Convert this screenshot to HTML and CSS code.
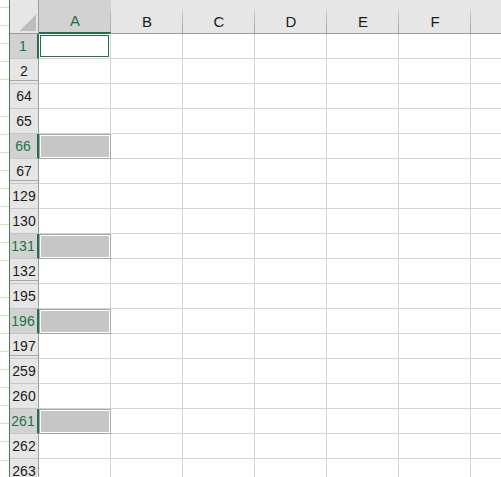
FILE: index.html
```html
<!DOCTYPE html>
<html lang="ja">
<head>
    <meta charset="UTF-8" />
    <title>Book1 - Excel</title>
    <link rel="stylesheet" href="styles.css">
</head>
<body>
    <div class="gutter"></div>

    <div class="sheet">
        <div class="row head">
            <div class="corner"></div>
            <div class="ch on">A</div>
            <div class="ch">B</div>
            <div class="ch">C</div>
            <div class="ch">D</div>
            <div class="ch">E</div>
            <div class="ch">F</div>
            <div class="ch"></div>
        </div>

        <div class="row">
            <div class="rh on">1</div>
            <div class="c active"></div><div class="c"></div><div class="c"></div><div class="c"></div><div class="c"></div><div class="c"></div><div class="c"></div>
        </div>
        <div class="row">
            <div class="rh gap">2</div>
            <div class="c"></div><div class="c"></div><div class="c"></div><div class="c"></div><div class="c"></div><div class="c"></div><div class="c"></div>
        </div>
        <div class="row">
            <div class="rh">64</div>
            <div class="c"></div><div class="c"></div><div class="c"></div><div class="c"></div><div class="c"></div><div class="c"></div><div class="c"></div>
        </div>
        <div class="row">
            <div class="rh">65</div>
            <div class="c"></div><div class="c"></div><div class="c"></div><div class="c"></div><div class="c"></div><div class="c"></div><div class="c"></div>
        </div>
        <div class="row">
            <div class="rh on">66</div>
            <div class="c sel"></div><div class="c"></div><div class="c"></div><div class="c"></div><div class="c"></div><div class="c"></div><div class="c"></div>
        </div>
        <div class="row">
            <div class="rh gap">67</div>
            <div class="c"></div><div class="c"></div><div class="c"></div><div class="c"></div><div class="c"></div><div class="c"></div><div class="c"></div>
        </div>
        <div class="row">
            <div class="rh">129</div>
            <div class="c"></div><div class="c"></div><div class="c"></div><div class="c"></div><div class="c"></div><div class="c"></div><div class="c"></div>
        </div>
        <div class="row">
            <div class="rh">130</div>
            <div class="c"></div><div class="c"></div><div class="c"></div><div class="c"></div><div class="c"></div><div class="c"></div><div class="c"></div>
        </div>
        <div class="row">
            <div class="rh on">131</div>
            <div class="c sel"></div><div class="c"></div><div class="c"></div><div class="c"></div><div class="c"></div><div class="c"></div><div class="c"></div>
        </div>
        <div class="row">
            <div class="rh gap">132</div>
            <div class="c"></div><div class="c"></div><div class="c"></div><div class="c"></div><div class="c"></div><div class="c"></div><div class="c"></div>
        </div>
        <div class="row">
            <div class="rh">195</div>
            <div class="c"></div><div class="c"></div><div class="c"></div><div class="c"></div><div class="c"></div><div class="c"></div><div class="c"></div>
        </div>
        <div class="row">
            <div class="rh on">196</div>
            <div class="c sel"></div><div class="c"></div><div class="c"></div><div class="c"></div><div class="c"></div><div class="c"></div><div class="c"></div>
        </div>
        <div class="row">
            <div class="rh gap">197</div>
            <div class="c"></div><div class="c"></div><div class="c"></div><div class="c"></div><div class="c"></div><div class="c"></div><div class="c"></div>
        </div>
        <div class="row">
            <div class="rh">259</div>
            <div class="c"></div><div class="c"></div><div class="c"></div><div class="c"></div><div class="c"></div><div class="c"></div><div class="c"></div>
        </div>
        <div class="row">
            <div class="rh">260</div>
            <div class="c"></div><div class="c"></div><div class="c"></div><div class="c"></div><div class="c"></div><div class="c"></div><div class="c"></div>
        </div>
        <div class="row">
            <div class="rh on">261</div>
            <div class="c sel"></div><div class="c"></div><div class="c"></div><div class="c"></div><div class="c"></div><div class="c"></div><div class="c"></div>
        </div>
        <div class="row">
            <div class="rh">262</div>
            <div class="c"></div><div class="c"></div><div class="c"></div><div class="c"></div><div class="c"></div><div class="c"></div><div class="c"></div>
        </div>
        <div class="row">
            <div class="rh">263</div>
            <div class="c"></div><div class="c"></div><div class="c"></div><div class="c"></div><div class="c"></div><div class="c"></div><div class="c"></div>
        </div>
    </div>
</body>
</html>
```

FILE: styles.css
```css
:root {
    --green: #217346;
    --head-bg: #e6e6e6;
    --head-on: #d2d2d2;
    --grid: #d4d4d4;
    --head-line: #9b9b9b;
    --text: #1a1a1a;
}

* {
    box-sizing: border-box;
}

html, body {
    margin: 0;
    height: 100%;
    overflow: hidden;
}

body {
    display: flex;
    background: #ffffff;
    font-family: 'Liberation Sans', 'Noto Sans CJK JP', sans-serif;
    font-size: 14px;
    color: var(--text);
}

/* outline strip on the far left */
.gutter {
    flex: 0 0 10px;
    border-right: 1px solid #4d7a60;
    background: repeating-linear-gradient(
        to bottom,
        #ffffff 0,
        #ffffff 7px,
        #cfe6b4 7px,
        #cfe6b4 8px,
        #ffffff 8px,
        #ffffff 18.1px
    );
}

.sheet {
    display: flex;
    flex-direction: column;
}

.row {
    display: flex;
    height: 25px;
    flex: 0 0 25px;
}

.row.head {
    height: 34px;
    flex-basis: 34px;
    background: var(--head-bg);
}

.corner {
    width: 29px;
    border-bottom: 1px solid var(--head-line);
    border-right: 1px solid var(--head-line);
    background:
        linear-gradient(to bottom right, transparent 50%, #bdbdbd 50%) right 2px bottom 2px / 16px 16px no-repeat,
        var(--head-bg);
}

.ch {
    width: 72px;
    flex: 0 0 72px;
    display: flex;
    align-items: center;
    justify-content: center;
    padding-top: 10px;
    border-bottom: 1px solid var(--head-line);
    background:
        linear-gradient(#cfcfcf, #a5a5a5) right 10px / 1px calc(100% - 10px) no-repeat,
        var(--head-bg);
    font-size: 15px;
}

.ch.on {
    color: var(--green);
    border-bottom: 2px solid var(--green);
    padding-top: 9px;
    background:
        linear-gradient(#c4c4c4, #a5a5a5) right 10px / 1px calc(100% - 10px) no-repeat,
        var(--head-on);
}

.rh {
    width: 29px;
    flex: 0 0 29px;
    background: var(--head-bg);
    border-right: 1px solid var(--head-line);
    border-bottom: 1px solid #c6c6c6;
    text-align: center;
    line-height: 24px;
    font-size: 14px;
}

.rh.on {
    background: var(--head-on);
    color: var(--green);
    border-right: 2px solid var(--green);
    padding-right: 1px;
}

/* row just above a hidden block */
.rh.gap {
    box-shadow: inset 0 -2px 0 var(--head-bg), inset 0 -3px 0 #a8a8a8;
}

.c {
    width: 72px;
    flex: 0 0 72px;
    border-right: 1px solid var(--grid);
    border-bottom: 1px solid var(--grid);
}

.c.active {
    box-shadow: inset 0 0 0 1px #ffffff, inset 0 0 0 2px var(--green);
    border-top: 1px solid var(--green);
    margin-top: -1px;
    height: 26px;
}

.c.sel {
    background: #c6c6c6;
    border-color: #a6a6a6;
    box-shadow: inset 1px 1px 0 #a6a6a6, inset 2px 2px 0 #ffffff, inset -1px -1px 0 #ffffff;
}
```
